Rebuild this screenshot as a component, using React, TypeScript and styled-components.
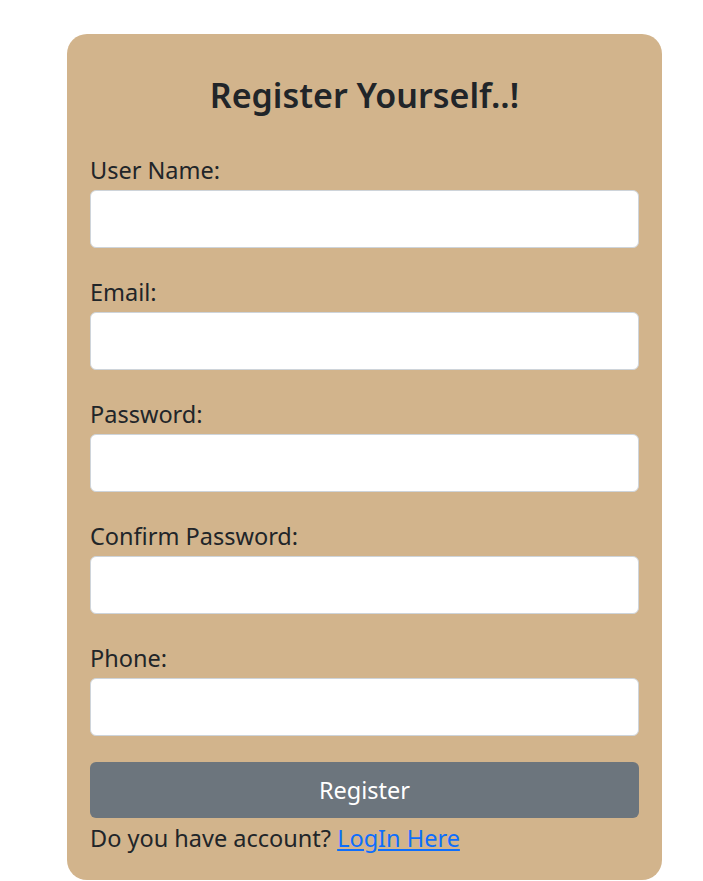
import React from "react";
import styled, { createGlobalStyle } from "styled-components";

const Global = createGlobalStyle`
  html, body { margin: 0; padding: 0; background: #ffffff; }
  body {
    font-family: "Noto Sans", "Open Sans", sans-serif;
    color: #212529;
  }
  * { box-sizing: border-box; }
`;

const Page = styled.div`
  padding: 34px 0 0 67px;
`;

const Card = styled.form`
  width: 595px;
  height: 846px;
  background: #d2b48c;
  border-radius: 20px;
  padding: 41px 23px 24px;
  display: flex;
  flex-direction: column;
`;

const Title = styled.h2`
  margin: 0 0 37px;
  font-size: 34px;
  font-weight: 600;
  line-height: 40px;
  text-align: center;
  color: #212529;
`;

const Field = styled.div`
  display: flex;
  flex-direction: column;
  margin-bottom: 26px;
`;

const Label = styled.label`
  font-size: 23.5px;
  line-height: 36px;
  margin-bottom: 2px;
`;

const Input = styled.input`
  height: 58px;
  width: 100%;
  border: 1px solid #ced4da;
  border-radius: 6px;
  background: #ffffff;
  font-family: inherit;
  font-size: 23.5px;
  padding: 0 18px;
  outline: none;
`;

const Button = styled.button`
  height: 58px;
  width: 100%;
  border: none;
  border-radius: 6px;
  background: #6c757d;
  color: #ffffff;
  font-family: inherit;
  font-size: 23.5px;
  cursor: pointer;
`;

const Footer = styled.p`
  margin: 2px 0 0;
  font-size: 23.5px;
  line-height: 36px;
`;

const Link = styled.a`
  color: #0d6efd;
  text-decoration: underline;
`;

const fields = [
  { id: "username", label: "User Name:", type: "text" },
  { id: "email", label: "Email:", type: "email" },
  { id: "password", label: "Password:", type: "password" },
  { id: "confirm", label: "Confirm Password:", type: "password" },
  { id: "phone", label: "Phone:", type: "tel" },
];

export default function App() {
  return (
    <>
      <Global />
      <Page>
        <Card onSubmit={(e) => e.preventDefault()}>
          <Title>Register Yourself..!</Title>
          {fields.map((f) => (
            <Field key={f.id}>
              <Label htmlFor={f.id}>{f.label}</Label>
              <Input id={f.id} type={f.type} />
            </Field>
          ))}
          <Button type="submit">Register</Button>
          <Footer>
            Do you have account? <Link href="#">LogIn Here</Link>
          </Footer>
        </Card>
      </Page>
    </>
  );
}
